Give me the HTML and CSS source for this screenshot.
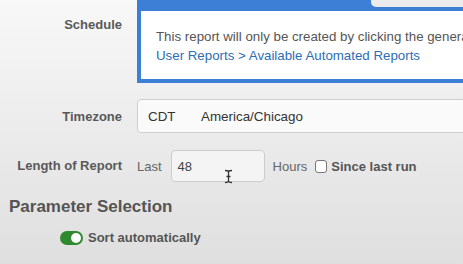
FILE: index.html
```html
<!DOCTYPE html>
<html lang="en">
<head>
  <meta charset="UTF-8" />
  <title>Report Schedule</title>
  <link rel="stylesheet" href="styles.css">
</head>
<body>

  <div class="form">
    <label class="form-label label-top">Schedule</label>
    <div class="panel">
      <div class="panel-head"><span class="panel-tab"></span></div>
      <div class="panel-body">
        <p>This report will only be created by clicking the generate button under</p>
        <a href="#">User Reports &gt; Available Automated Reports</a>
      </div>
    </div>

    <label class="form-label">Timezone</label>
    <div class="select-box">
      <span class="tz-code">CDT</span>
      <span>America/Chicago</span>
    </div>

    <label class="form-label">Length of Report</label>
    <div class="length-row">
      <span>Last</span>
      <div class="num-input">48</div>
      <span>Hours</span>
      <span class="checkbox"></span>
      <strong>Since last run</strong>
    </div>
  </div>

  <h2 class="section-title">Parameter Selection</h2>

  <div class="toggle-row">
    <span class="toggle"><span class="knob"></span></span>
    <strong>Sort automatically</strong>
  </div>

  <svg class="cursor" width="9" height="15" viewBox="0 0 9 15">
    <path d="M1 1.5 C3 1.5 4.5 2 4.5 3 L4.5 12 C4.5 13 3 13.5 1 13.5 M8 1.5 C6 1.5 4.5 2 4.5 3 M4.5 12 C4.5 13 6 13.5 8 13.5 M2.5 7.5 L6.5 7.5" fill="none" stroke="#333" stroke-width="1.3"/>
  </svg>

</body>
</html>
```

FILE: styles.css
```css
body {
  margin: 0;
  height: 264px;
  overflow: hidden;
  position: relative;
  font-family: 'Liberation Sans', Arial, sans-serif;
  font-size: 13px;
  color: #555;
  background: linear-gradient(#f8f8f8, #dfdfdf);
}

.form {
  display: grid;
  grid-template-columns: 122px 420px;
  column-gap: 15px;
  row-gap: 16px;
}

.form-label {
  font-weight: bold;
  text-align: right;
  align-self: center;
  color: #595959;
}

.label-top {
  align-self: start;
  padding-top: 17px;
}

.panel {
  background: #3d7fd6;
  padding: 0 4px 4px;
}

.panel-head {
  height: 11px;
}

.panel-tab {
  display: block;
  margin-left: 230px;
  width: 200px;
  height: 7px;
  background: #ececec;
  border-radius: 0 0 0 5px;
}

.panel-body {
  background: #fff;
  padding: 16px 15px 14px;
  font-size: 13.3px;
  line-height: 19px;
  white-space: nowrap;
}

.panel-body p {
  margin: 0;
}

.panel-body a {
  color: #2d6db5;
  text-decoration: none;
}

.select-box {
  height: 32px;
  display: flex;
  align-items: center;
  padding-left: 10px;
  background: #fafafa;
  border: 1px solid #cfcfcf;
  border-radius: 4px;
  font-size: 13.4px;
  color: #333;
}

.tz-code {
  width: 53px;
}

.length-row {
  display: flex;
  align-items: center;
  color: #666;
  margin-top: 1px;
}

.num-input {
  width: 86px;
  height: 30px;
  margin: 0 8px 0 9px;
  padding-left: 6px;
  display: flex;
  align-items: center;
  border: 1px solid #cdcdcd;
  border-radius: 4px;
  background: #f4f4f4;
  color: #444;
}

.checkbox {
  width: 10px;
  height: 11px;
  margin: 0 4px 0 8px;
  border: 1px solid #777;
  border-radius: 3px;
  background: #fff;
}

.length-row strong {
  color: #555;
}

.section-title {
  margin: 15px 0 0 9px;
  font-size: 17px;
  line-height: 20px;
  color: #555;
}

.toggle-row {
  display: flex;
  align-items: center;
  gap: 5px;
  margin: 13px 0 0 60px;
  color: #555;
}

.toggle {
  width: 23px;
  height: 14px;
  border-radius: 7px;
  background: #2f8a2f;
  position: relative;
}

.knob {
  position: absolute;
  right: 2px;
  top: 2px;
  width: 10px;
  height: 10px;
  border-radius: 50%;
  background: #fff;
}

.cursor {
  position: absolute;
  left: 224px;
  top: 169px;
}
```
